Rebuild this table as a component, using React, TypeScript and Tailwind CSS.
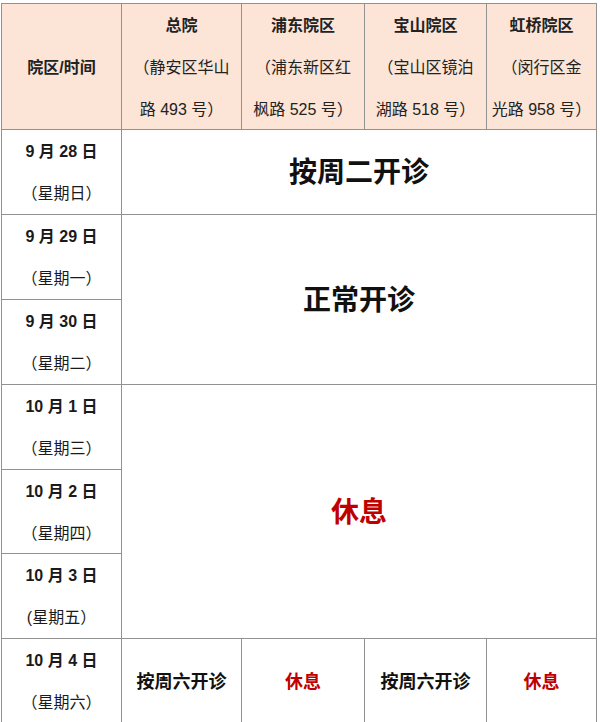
import React from "react";

const font = { fontFamily: '"Liberation Sans", "Noto Sans CJK SC", sans-serif' };

function Header({ title, l2, l3 }: { title: string; l2: string; l3: string }) {
  return (
    <div className="bg-[#fce4d6] flex flex-col items-center justify-center text-center leading-[42px] text-[16px] text-[#222] pt-[2px]">
      <div className="font-bold">{title}</div>
      <div className="whitespace-nowrap">{l2}</div>
      <div className="whitespace-nowrap">{l3}</div>
    </div>
  );
}

function DateCell({ d, w, cls }: { d: string; w: string; cls: string }) {
  return (
    <div className={"bg-white flex flex-col items-center justify-center leading-[42px] text-[16px] text-[#1a1a1a] col-start-1 pt-[2px] " + cls}>
      <div className="font-bold whitespace-nowrap">{d}</div>
      <div className="whitespace-nowrap">{w}</div>
    </div>
  );
}

export default function App() {
  return (
    <div className="w-[600px] h-[722px] overflow-hidden bg-white" style={font}>
      <div className="mt-[3px] ml-px w-fit grid grid-cols-[119px_119px_122px_121px_109px] grid-rows-[125px_84px_84px_84px_84px_83px_84px_84px] gap-px bg-[#929292] p-px">
        <div className="bg-[#fce4d6] flex items-center justify-center text-[16px] font-bold text-[#222] pt-[2px]">院区/时间</div>
        <Header title="总院" l2="（静安区华山" l3="路 493 号）" />
        <Header title="浦东院区" l2="（浦东新区红" l3="枫路 525 号）" />
        <Header title="宝山院区" l2="（宝山区镜泊" l3="湖路 518 号）" />
        <Header title="虹桥院区" l2="（闵行区金" l3="光路 958 号）" />

        <DateCell d="9 月 28 日" w="（星期日）" cls="row-start-2" />
        <div className="bg-white col-start-2 col-span-4 row-start-2 flex items-center justify-center text-[28px] font-bold text-[#111] pt-[2px]">按周二开诊</div>

        <DateCell d="9 月 29 日" w="（星期一）" cls="row-start-3" />
        <DateCell d="9 月 30 日" w="（星期二）" cls="row-start-4" />
        <div className="bg-white col-start-2 col-span-4 row-start-3 row-span-2 flex items-center justify-center text-[28px] font-bold text-[#111] pt-[2px]">正常开诊</div>

        <DateCell d="10 月 1 日" w="（星期三）" cls="row-start-5" />
        <DateCell d="10 月 2 日" w="（星期四）" cls="row-start-6" />
        <DateCell d="10 月 3 日" w="(星期五）" cls="row-start-7" />
        <div className="bg-white col-start-2 col-span-4 row-start-5 row-span-3 flex items-center justify-center text-[28px] font-bold text-[#c00000] pt-[2px]">休息</div>

        <DateCell d="10 月 4 日" w="（星期六）" cls="row-start-8" />
        <div className="bg-white col-start-2 row-start-8 flex items-center justify-center text-[18px] font-bold text-[#111] pt-[2px]">按周六开诊</div>
        <div className="bg-white col-start-3 row-start-8 flex items-center justify-center text-[18px] font-bold text-[#c00000] pt-[2px]">休息</div>
        <div className="bg-white col-start-4 row-start-8 flex items-center justify-center text-[18px] font-bold text-[#111] pt-[2px]">按周六开诊</div>
        <div className="bg-white col-start-5 row-start-8 flex items-center justify-center text-[18px] font-bold text-[#c00000] pt-[2px]">休息</div>
      </div>
    </div>
  );
}
